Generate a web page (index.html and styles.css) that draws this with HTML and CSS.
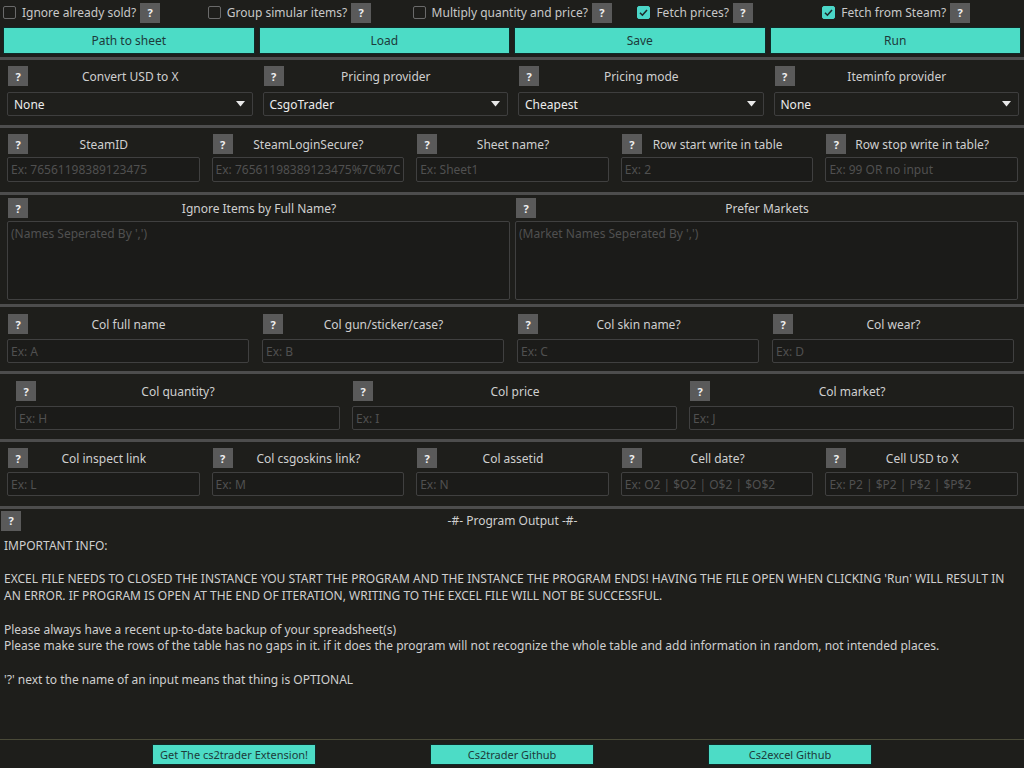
FILE: index.html
```html
<!DOCTYPE html>
<html>
<head>
<meta charset="utf-8">
<link rel="stylesheet" href="styles.css">
</head>
<body>
<div class="app">
  <div class="opts">
    <div class="opt"><span class="cb"></span><span class="opt-label">Ignore already sold?</span><span class="q">?</span></div>
    <div class="opt"><span class="cb"></span><span class="opt-label">Group simular items?</span><span class="q">?</span></div>
    <div class="opt"><span class="cb"></span><span class="opt-label">Multiply quantity and price?</span><span class="q">?</span></div>
    <div class="opt opt-shift"><span class="cb cb-on"><svg viewBox="0 0 13 13" width="13" height="13"><path d="M3 6.8 L5.4 9.2 L10 4" fill="none" stroke="#1d2a2a" stroke-width="1.6"/></svg></span><span class="opt-label">Fetch prices?</span><span class="q">?</span></div>
    <div class="opt"><span class="cb cb-on"><svg viewBox="0 0 13 13" width="13" height="13"><path d="M3 6.8 L5.4 9.2 L10 4" fill="none" stroke="#1d2a2a" stroke-width="1.6"/></svg></span><span class="opt-label">Fetch from Steam?</span><span class="q">?</span></div>
  </div>

  <div class="actions">
    <button class="btn">Path to sheet</button>
    <button class="btn">Load</button>
    <button class="btn">Save</button>
    <button class="btn">Run</button>
  </div>

  <section class="panel p-drop">
    <div class="field"><div class="head"><span class="q">?</span><span class="lbl">Convert USD to X</span></div><div class="select"><span>None</span><svg width="9" height="6" viewBox="0 0 9 6"><path d="M0 0 H9 L4.5 5.5 Z" fill="#e8e8e8"/></svg></div></div>
    <div class="field"><div class="head"><span class="q">?</span><span class="lbl">Pricing provider</span></div><div class="select"><span>CsgoTrader</span><svg width="9" height="6" viewBox="0 0 9 6"><path d="M0 0 H9 L4.5 5.5 Z" fill="#e8e8e8"/></svg></div></div>
    <div class="field"><div class="head"><span class="q">?</span><span class="lbl">Pricing mode</span></div><div class="select"><span>Cheapest</span><svg width="9" height="6" viewBox="0 0 9 6"><path d="M0 0 H9 L4.5 5.5 Z" fill="#e8e8e8"/></svg></div></div>
    <div class="field"><div class="head"><span class="q">?</span><span class="lbl">Iteminfo provider</span></div><div class="select"><span>None</span><svg width="9" height="6" viewBox="0 0 9 6"><path d="M0 0 H9 L4.5 5.5 Z" fill="#e8e8e8"/></svg></div></div>
  </section>

  <section class="panel p-five p-steam">
    <div class="field"><div class="head"><span class="q">?</span><span class="lbl">SteamID</span></div><input class="inp" placeholder="Ex: 76561198389123475"></div>
    <div class="field"><div class="head"><span class="q">?</span><span class="lbl">SteamLoginSecure?</span></div><input class="inp" placeholder="Ex: 76561198389123475%7C%7C"></div>
    <div class="field"><div class="head"><span class="q">?</span><span class="lbl">Sheet name?</span></div><input class="inp" placeholder="Ex: Sheet1"></div>
    <div class="field"><div class="head"><span class="q">?</span><span class="lbl">Row start write in table</span></div><input class="inp" placeholder="Ex: 2"></div>
    <div class="field"><div class="head"><span class="q">?</span><span class="lbl">Row stop write in table?</span></div><input class="inp" placeholder="Ex: 99 OR no input"></div>
  </section>

  <section class="panel p-two">
    <div class="field"><div class="head"><span class="q">?</span><span class="lbl">Ignore Items by Full Name?</span></div><textarea class="area" placeholder="(Names Seperated By ',')"></textarea></div>
    <div class="field"><div class="head"><span class="q">?</span><span class="lbl">Prefer Markets</span></div><textarea class="area" placeholder="(Market Names Seperated By ',')"></textarea></div>
  </section>

  <section class="panel p-four">
    <div class="field"><div class="head"><span class="q">?</span><span class="lbl">Col full name</span></div><input class="inp" placeholder="Ex: A"></div>
    <div class="field"><div class="head"><span class="q">?</span><span class="lbl">Col gun/sticker/case?</span></div><input class="inp" placeholder="Ex: B"></div>
    <div class="field"><div class="head"><span class="q">?</span><span class="lbl">Col skin name?</span></div><input class="inp" placeholder="Ex: C"></div>
    <div class="field"><div class="head"><span class="q">?</span><span class="lbl">Col wear?</span></div><input class="inp" placeholder="Ex: D"></div>
  </section>

  <section class="panel p-three">
    <div class="field"><div class="head"><span class="q">?</span><span class="lbl">Col quantity?</span></div><input class="inp" placeholder="Ex: H"></div>
    <div class="field"><div class="head"><span class="q">?</span><span class="lbl">Col price</span></div><input class="inp" placeholder="Ex: I"></div>
    <div class="field"><div class="head"><span class="q">?</span><span class="lbl">Col market?</span></div><input class="inp" placeholder="Ex: J"></div>
  </section>

  <section class="panel p-five p-cells">
    <div class="field"><div class="head"><span class="q">?</span><span class="lbl">Col inspect link</span></div><input class="inp" placeholder="Ex: L"></div>
    <div class="field"><div class="head"><span class="q">?</span><span class="lbl">Col csgoskins link?</span></div><input class="inp" placeholder="Ex: M"></div>
    <div class="field"><div class="head"><span class="q">?</span><span class="lbl">Col assetid</span></div><input class="inp" placeholder="Ex: N"></div>
    <div class="field"><div class="head"><span class="q">?</span><span class="lbl">Cell date?</span></div><input class="inp" placeholder="Ex: O2 | $O2 | O$2 | $O$2"></div>
    <div class="field"><div class="head"><span class="q">?</span><span class="lbl">Cell USD to X</span></div><input class="inp" placeholder="Ex: P2 | $P2 | P$2 | $P$2"></div>
  </section>

  <section class="output">
    <div class="out-head"><span class="q">?</span><span class="out-title">-#- Program Output -#-</span></div>
    <div class="out-text">IMPORTANT INFO:

EXCEL FILE NEEDS TO CLOSED THE INSTANCE YOU START THE PROGRAM AND THE INSTANCE THE PROGRAM ENDS! HAVING THE FILE OPEN WHEN CLICKING 'Run' WILL RESULT IN AN ERROR. IF PROGRAM IS OPEN AT THE END OF ITERATION, WRITING TO THE EXCEL FILE WILL NOT BE SUCCESSFUL.

Please always have a recent up-to-date backup of your spreadsheet(s)
Please make sure the rows of the table has no gaps in it. if it does the program will not recognize the whole table and add information in random, not intended places.

'?' next to the name of an input means that thing is OPTIONAL</div>
  </section>

  <div class="links">
    <button class="btn btn-sm">Get The cs2trader Extension!</button>
    <button class="btn btn-sm">Cs2trader Github</button>
    <button class="btn btn-sm">Cs2excel Github</button>
  </div>
</div>
</body>
</html>
```
FILE: styles.css
```css
* { box-sizing: border-box; }
html, body { margin: 0; padding: 0; }
body {
  background: #1e1e1b;
  color: #cfcfcf;
  font-family: "Noto Sans", "Open Sans", sans-serif;
  font-size: 12px;
  width: 1024px;
  height: 768px;
  overflow: hidden;
}
.app { display: flex; flex-direction: column; height: 768px; }

.q {
  display: inline-flex;
  align-items: center;
  justify-content: center;
  width: 20px;
  height: 20px;
  background: #5a5a5a;
  color: #f0f0f0;
  font-weight: bold;
  font-size: 11px;
  flex: none;
}

/* options row */
.opts {
  display: grid;
  grid-template-columns: repeat(5, 1fr);
  height: 25px;
  align-items: center;
}
.opt { display: flex; align-items: center; padding-left: 3px; white-space: nowrap; }
.opt-shift { padding-left: 23px; }
.cb {
  width: 13px; height: 13px;
  border: 1px solid #6a6a6a;
  border-radius: 2px;
  flex: none;
  display: inline-flex;
}
.cb-on { background: #4bd6c8; border-color: #4bd6c8; }
.cb-on svg { margin: -1px; }
.opt-label { margin: 0 4px 0 6px; color: #c8c8c8; }

/* action buttons */
.actions {
  display: grid;
  grid-template-columns: repeat(4, 1fr);
  gap: 4px;
  padding: 2px 3px 3px 3px;
}
.btn {
  background: #4cdcc6;
  border: 1px solid #0f2a28;
  color: #1d3a3a;
  font-family: inherit;
  font-size: 12px;
  height: 27px;
  padding: 0;
}

/* panels */
.panel {
  border-top: 3px solid #4d4d4d;
  display: grid;
}
.field { display: flex; flex-direction: column; min-width: 0; }
.head {
  display: grid;
  grid-template-columns: 20px 1fr 20px;
  align-items: center;
  padding-left: 1px;
  height: 20px;
}
.lbl { text-align: center; white-space: nowrap; color: #cfcfcf; }

.select {
  display: flex;
  align-items: center;
  justify-content: space-between;
  height: 24px;
  border: 1px solid #3e3e3e;
  border-radius: 2px;
  padding: 0 7px 0 6px;
  color: #ececec;
  background: #1f1f1c;
}

.inp, .area {
  background: #1b1b19;
  border: 1px solid #404040;
  border-radius: 2px;
  color: #cfcfcf;
  font-family: inherit;
  font-size: 12px;
  padding: 0 3px;
  outline: none;
  width: 100%;
}
.inp { height: 25px; }
.inp::placeholder, .area::placeholder { color: #505050; }
.area { height: 79px; resize: none; padding: 3px 3px; }

.p-drop { grid-template-columns: repeat(4, 1fr); gap: 10px; padding: 6px 5px 9px 7px; }
.p-drop .select { margin-top: 6px; }
.p-five { grid-template-columns: repeat(5, 1fr); gap: 12px; padding: 6px 6px 10px 7px; }
.p-five .inp { margin-top: 3px; }
.p-cells { padding-bottom: 10px; }
.p-cells .inp { margin-top: 4px; height: 24px; }
.p-two { grid-template-columns: 1fr 1fr; gap: 5px; padding: 3px 6px 4px 7px; }
.p-two .area { margin-top: 3px; }
.p-four { grid-template-columns: repeat(4, 1fr); gap: 13px; padding: 7px 10px 8px 7px; }
.p-four .inp { margin-top: 5px; height: 24px; }
.p-three { grid-template-columns: repeat(3, 1fr); gap: 12px; padding: 7px 10px 9px 15px; }
.p-three .inp { margin-top: 5px; height: 24px; }

/* output */
.output {
  border-top: 3px solid #4d4d4d;
  flex: 1;
  display: flex;
  flex-direction: column;
  border-bottom: 1px solid #4a4a38;
}
.out-head {
  display: grid;
  grid-template-columns: 20px 1fr 20px;
  align-items: center;
  padding: 1px 0 0 1px;
  height: 22px;
}
.out-title { text-align: center; color: #cfcfcf; }
.out-text {
  white-space: pre-wrap;
  font-size: 12px;
  line-height: 16.7px;
  padding: 7px 4px 0 4px;
  color: #cfcfcf;
}

.links {
  display: flex;
  justify-content: center;
  gap: 114px;
  padding: 4px 0 3px 0;
}
.btn-sm { width: 164px; height: 21px; font-size: 11px; }
```
